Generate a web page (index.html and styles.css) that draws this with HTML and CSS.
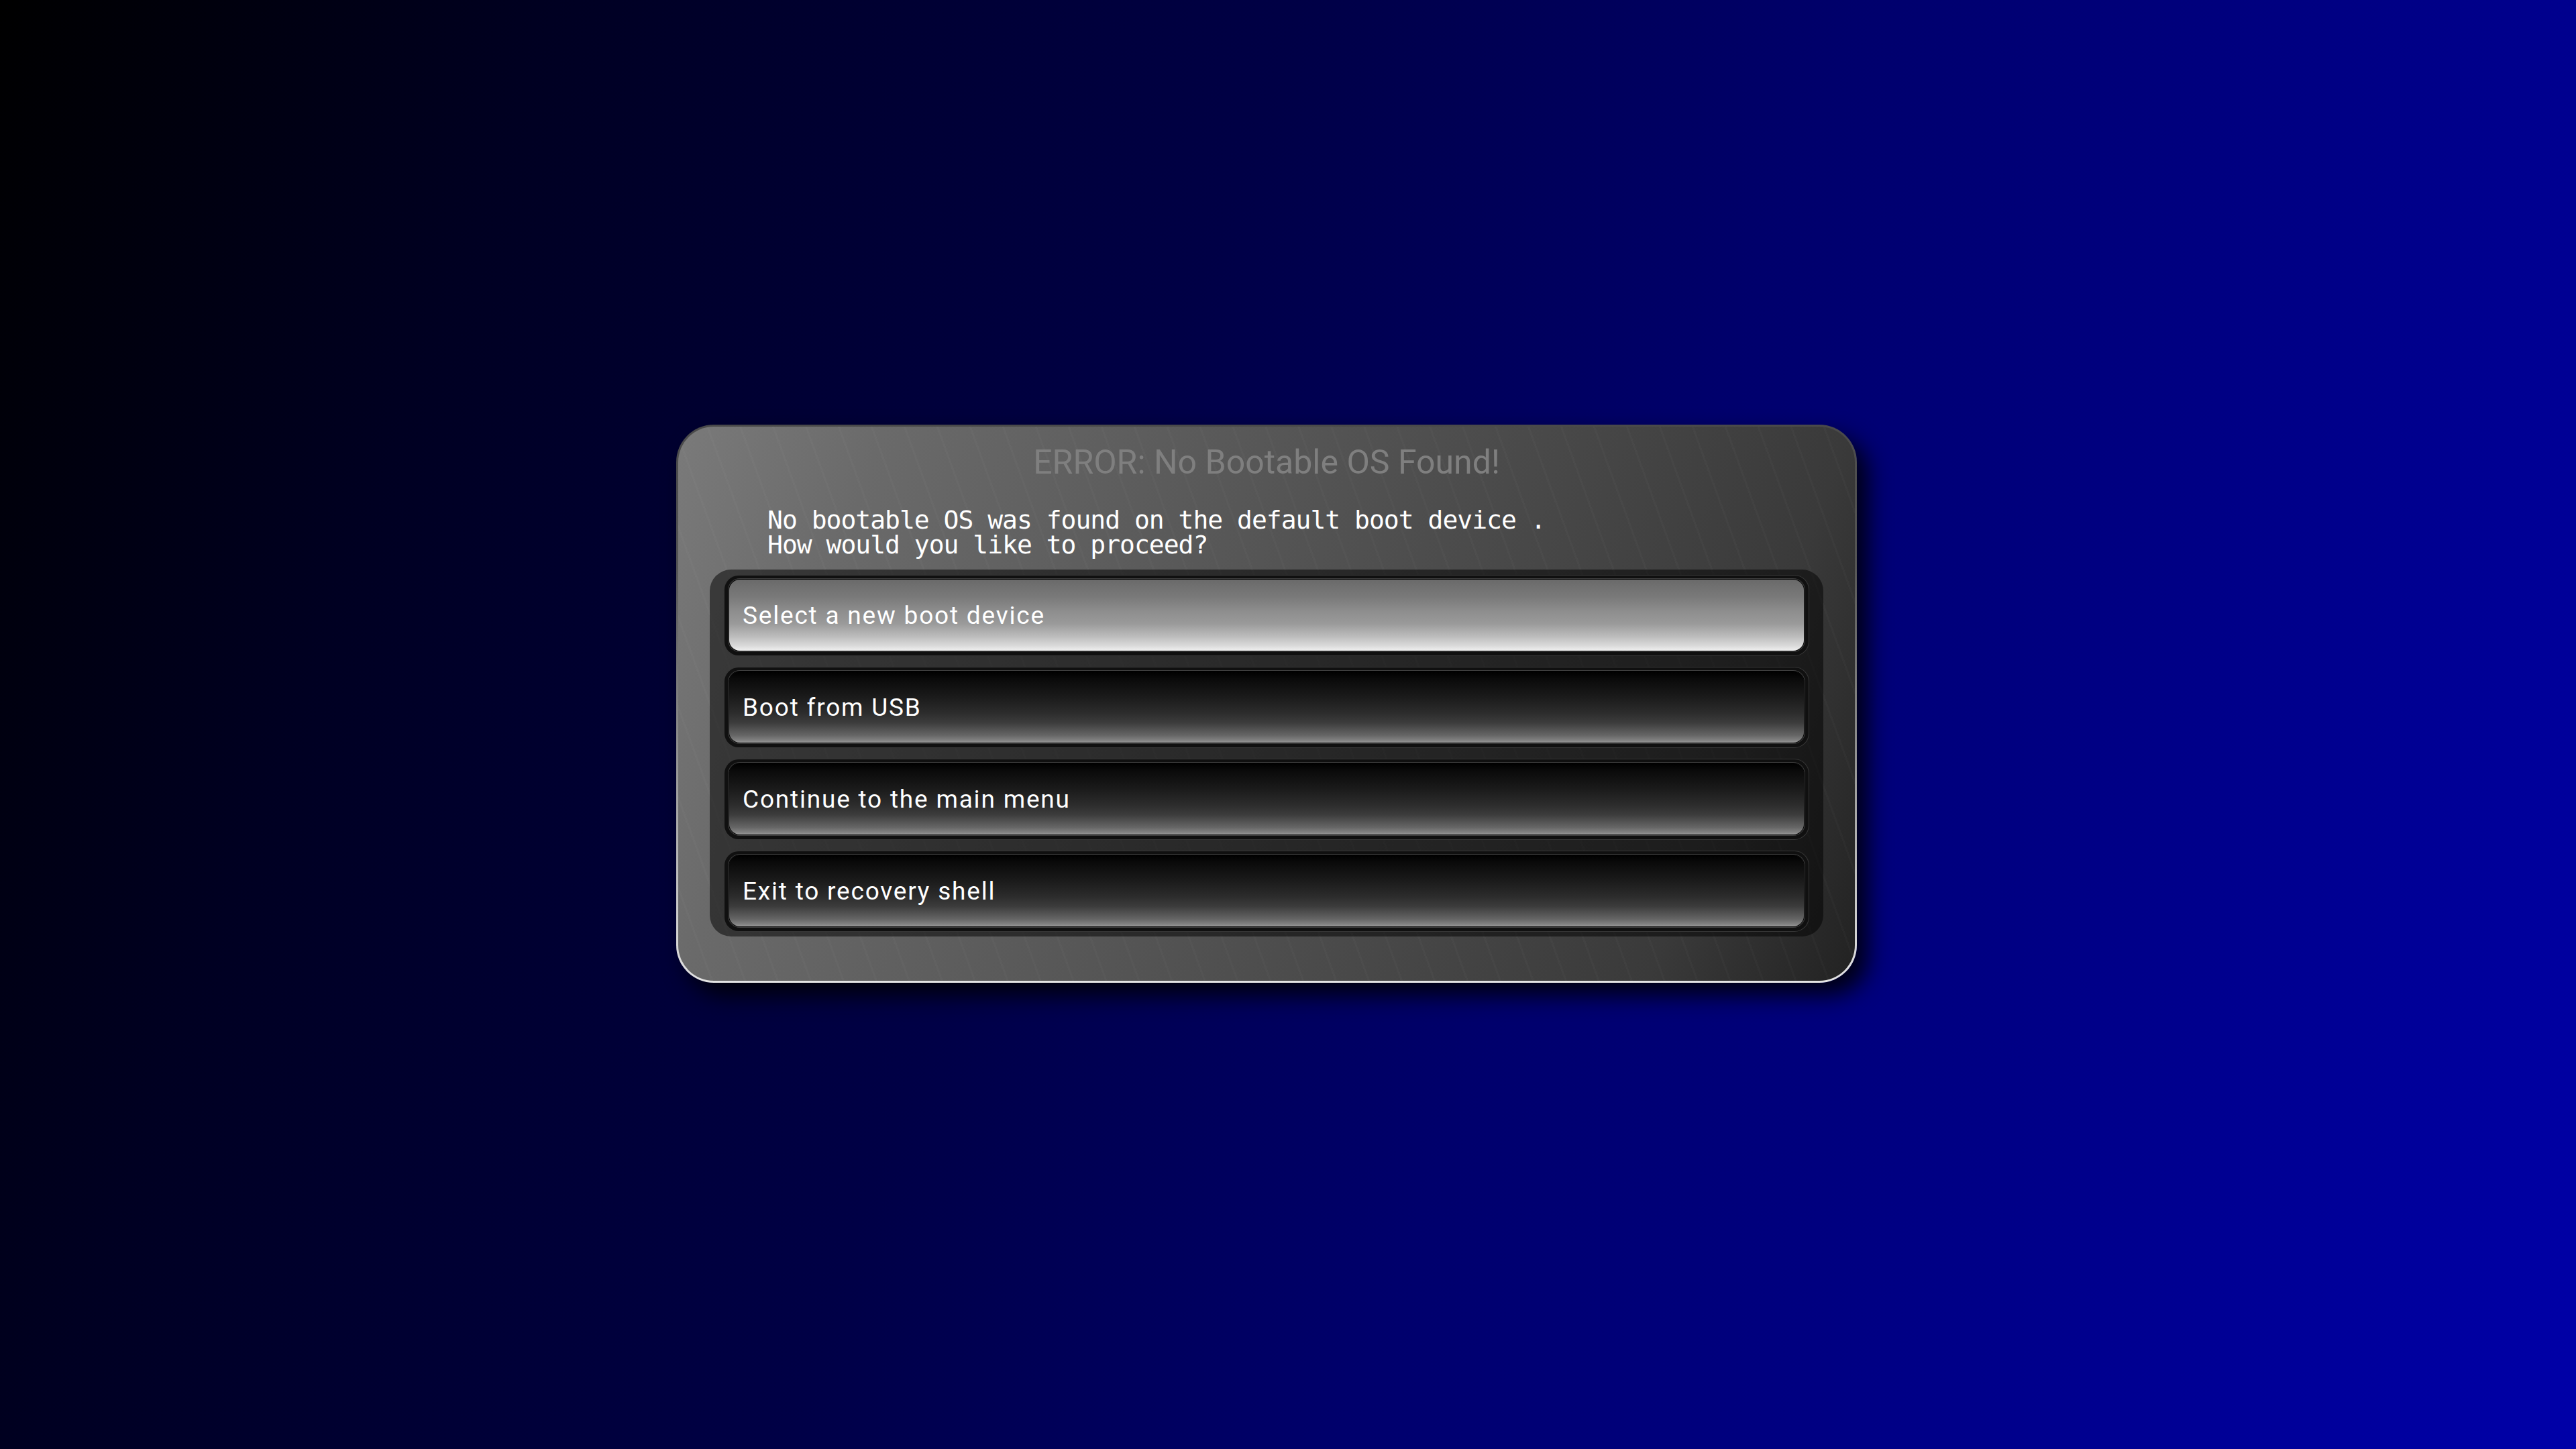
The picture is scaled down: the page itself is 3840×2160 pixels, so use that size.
FILE: index.html
```html
<!DOCTYPE html>
<html lang="en">
<head>
<meta charset="utf-8">
<title>Boot Error</title>
<link rel="stylesheet" href="styles.css">
</head>
<body>
  <main class="stage">
    <section class="dialog">
      <h1 class="title">ERROR: No Bootable OS Found!</h1>
      <p class="message">No bootable OS was found on the default boot device .<br>How would you like to proceed?</p>
      <ul class="options">
        <li class="opt sel"><div class="opt-inner">Select a new boot device</div></li>
        <li class="opt"><div class="opt-inner">Boot from USB</div></li>
        <li class="opt"><div class="opt-inner">Continue to the main menu</div></li>
        <li class="opt"><div class="opt-inner">Exit to recovery shell</div></li>
      </ul>
    </section>
  </main>
</body>
</html>
```

FILE: styles.css
```css
html, body {
  margin: 0;
  padding: 0;
  height: 100%;
}

body {
  background: linear-gradient(110deg, #000000 0%, #000022 18%, #000046 42%, #00006c 60%, #00008e 83%, #0000a8 100%);
  font-family: Roboto, "Liberation Sans", sans-serif;
}

.stage {
  box-sizing: border-box;
  height: 100vh;
  display: flex;
  align-items: center;
  justify-content: center;
  padding: 0 64px 62px 0;
}

.dialog {
  box-sizing: border-box;
  width: 1760px;
  border: 3px solid transparent;
  border-radius: 56px;
  padding: 23px 47px 66px;
  background:
    repeating-linear-gradient(70deg, rgba(255,255,255,0.018) 0 3px, rgba(255,255,255,0) 3px 46px) padding-box,
    linear-gradient(110deg, #7a7a7a 0%, #6a6a6a 15%, #525252 50%, #3a3a3a 85%, #222222 100%) padding-box,
    linear-gradient(to bottom, #4a4a4a 0%, #555555 25%, #8a8a8a 55%, #e4e4e4 100%) border-box;
  box-shadow: 16px 18px 34px rgba(0, 0, 0, 0.85);
}

.title {
  margin: 0;
  font-family: Roboto, "Liberation Sans", sans-serif;
  font-weight: 400;
  font-size: 50px;
  line-height: 60px;
  color: #7f7f7f;
  text-align: center;
}

.message {
  margin: 38px 0 18px 86px;
  font-family: "DejaVu Sans Mono", "Liberation Mono", monospace;
  font-size: 38px;
  letter-spacing: -1px;
  line-height: 37px;
  color: #ffffff;
}

.options {
  list-style: none;
  margin: 0;
  padding: 8px 21px 7px;
  border-radius: 32px;
  background: rgba(0, 0, 0, 0.5);
  display: flex;
  flex-direction: column;
  gap: 16px;
}

.opt {
  box-sizing: border-box;
  height: 121px;
  padding: 6px 7px 7px;
  border-radius: 22px;
  background: #101010;
  border: 1px solid rgba(255, 255, 255, 0.16);
}

.opt-inner {
  box-sizing: border-box;
  height: 100%;
  display: flex;
  align-items: center;
  padding-left: 20px;
  border-radius: 16px;
  font-family: Roboto, "Liberation Sans", sans-serif;
  font-weight: 400;
  font-size: 37px;
  letter-spacing: 1.8px;
  color: #ffffff;
  background: linear-gradient(to bottom, #000000 0%, #0a0a0a 10%, #1a1a1a 35%, #2c2c2c 58%, #3c3c3c 72%, #666666 90%, #838383 97%, #9a9a9a 100%);
  box-shadow: 0 0 0 1px #000000, 0 0 0 2px #3e3e3e;
}

.opt.sel .opt-inner {
  background: linear-gradient(to bottom, #6a6a6a 0%, #7a7a7a 25%, #8e8e8e 45%, #9a9a9a 62%, #bcbcbc 80%, #dadada 93%, #f0f0f0 100%);
}
```
